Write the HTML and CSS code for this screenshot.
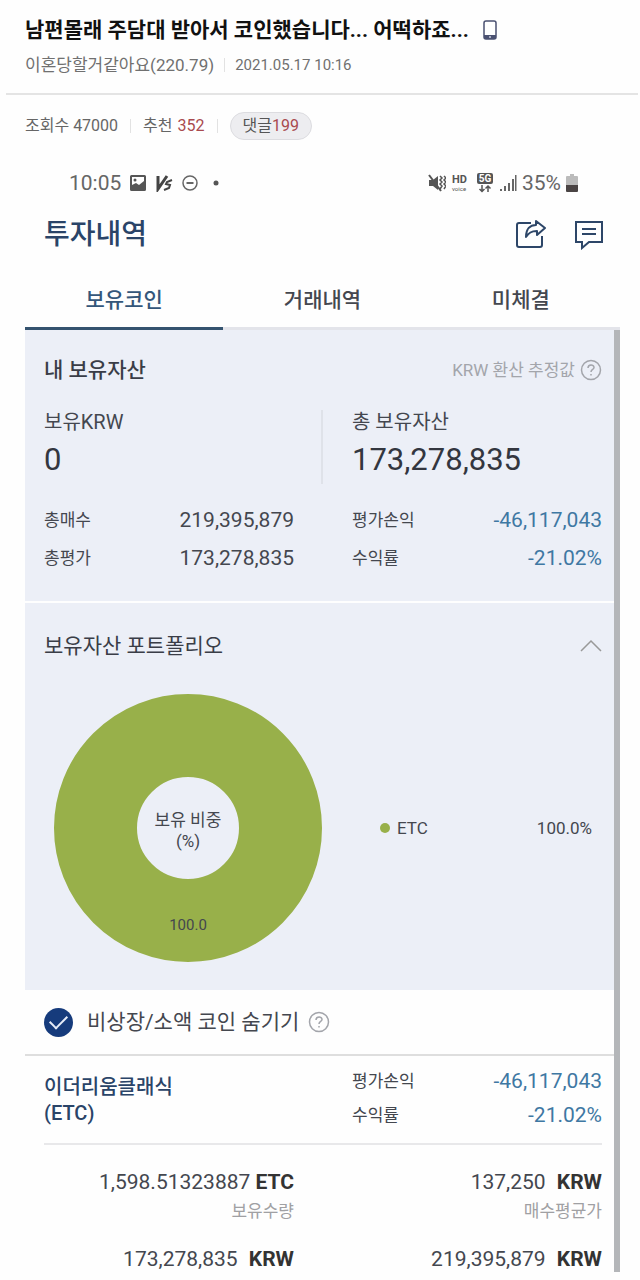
FILE: index.html
```
<!DOCTYPE html>
<html lang="ko">
<head>
    <meta charset="UTF-8">
    <meta name="viewport" content="width=device-width, initial-scale=1.0">
    <title>투자내역</title>
    <link rel="stylesheet" href="styles.css">
</head>
<body>
    <header class="post-header">
        <h1 class="post-title">
            남편몰래 주담대 받아서 코인했습니다... 어떡하죠...
            <svg class="phone-icon" viewBox="0 0 14 20" width="14" height="20">
                <rect x="1" y="1" width="12" height="18" rx="2" fill="#fff" stroke="#4b5272" stroke-width="1.5"/>
                <path d="M1 15h12v2.500a1.500 1.500 0 0 1-1.500 1.500h-9a1.500 1.500 0 0 1-1.500-1.500z" fill="#4b5272"/>
                <circle cx="7" cy="17" r="1" fill="#c9cede"/>
            </svg>
        </h1>
        <div class="post-meta">
            <span>이혼당할거같아요(220.79)</span>
            <time class="post-date">2021.05.17 10:16</time>
        </div>
    </header>

    <div class="post-stats">
        <span>조회수 47000</span>
        <span class="stat">추천 <b class="red">352</b></span>
        <span class="stat"><a class="comment-pill" href="#comments">댓글<b class="red">199</b></a></span>
    </div>

    <main class="app">
        <div class="status-bar">
            <div class="status-group">
                <span>10:05</span>
                <svg width="18" height="18" viewBox="0 0 18 18">
                    <path d="M2.500 1h13A1.500 1.500 0 0 1 17 2.500v13a1.500 1.500 0 0 1-1.500 1.500h-13A1.500 1.500 0 0 1 1 15.500v-13A1.500 1.500 0 0 1 2.500 1zM3 3v8l4-2 3 2 5-4V3z" fill="#555" fill-rule="evenodd"/>
                    <circle cx="6" cy="6" r="1.500" fill="#555"/>
                </svg>
                <svg width="18" height="18" viewBox="0 0 18 18" fill="none" stroke="#444">
                    <path d="M3 2v13L12 2" stroke-width="3"/>
                    <path d="M17 6l-5 2-1 2 4 1-1 3-5 2" stroke-width="2"/>
                </svg>
                <svg width="18" height="18" viewBox="0 0 18 18" fill="none" stroke="#666">
                    <circle cx="9" cy="9" r="7" stroke-width="1.500"/>
                    <path d="M5.500 9h7" stroke-width="2"/>
                </svg>
                <svg width="18" height="18" viewBox="0 0 18 18"><circle cx="9" cy="9" r="2.500" fill="#555"/></svg>
            </div>
            <div class="status-group tight">
                <svg width="18" height="18" viewBox="0 0 18 18">
                    <path d="M1 6h4l5-4v14l-5-4H1z" fill="#555"/>
                    <path d="M1 1l12 16" stroke="#555" stroke-width="2"/>
                    <path d="M12 2l2 2-2 2 2 2-2 2 2 2-2 3M16 2l2 2-2 2 2 2-2 2 2 2-2 3" stroke="#555" stroke-width="1.500" fill="none"/>
                </svg>
                <svg width="20" height="24" viewBox="0 0 20 24" fill="#555">
                    <text class="hd" x="1" y="12">HD</text>
                    <text class="voice" x="1" y="20">voice</text>
                </svg>
                <svg width="18" height="20" viewBox="0 0 18 20">
                    <rect x="1" y="0" width="16" height="11" rx="2" fill="#555"/>
                    <text class="five-g" x="9" y="9" text-anchor="middle" fill="#fff">5G</text>
                    <path d="M6 12v6M3.500 16L6 18.500 8.500 16M12 19v-6M9.500 15.500L12 13l2.500 2.500" stroke="#555" stroke-width="1.500" fill="none"/>
                </svg>
                <svg width="18" height="18" viewBox="0 0 18 18" fill="#666">
                    <path d="M1 15h2v2H1zM5 12h2v5H5zM9 9h2v8H9zM13 5h2v12h-2zM16 1h1.500v16H16z"/>
                </svg>
                <span>35%</span>
                <svg width="12" height="18" viewBox="0 0 12 18">
                    <path d="M4 0h4v2h3a1 1 0 0 1 1 1v9H0V3a1 1 0 0 1 1-1h3z" fill="#bbb"/>
                    <path d="M0 11h12v6a1 1 0 0 1-1 1H1a1 1 0 0 1-1-1z" fill="#4a4444"/>
                </svg>
            </div>
        </div>

        <div class="app-bar">
            <h2 class="app-title">투자내역</h2>
            <div class="app-actions">
                <button class="icon-button" aria-label="공유">
                    <svg width="30" height="30" viewBox="0 0 30 30" fill="none" stroke="#2d4668" stroke-width="2" stroke-linejoin="round">
                        <path d="M15 3H3a2 2 0 0 0-2 2v20a2 2 0 0 0 2 2h21a2 2 0 0 0 2-2v-9"/>
                        <path d="M20 1l9 7-8 7v-4c-6 0-8 2-11 6 0-8 4-12 10-12z"/>
                    </svg>
                </button>
                <button class="icon-button" aria-label="메시지">
                    <svg width="30" height="30" viewBox="0 0 30 30" fill="none" stroke="#2d4668" stroke-width="2">
                        <path d="M1 2h26v20H14l-7 6v-6H1z"/>
                        <path d="M7 9h14M7 14h14"/>
                    </svg>
                </button>
            </div>
        </div>

        <nav class="tabs">
            <button class="tab active">보유코인</button>
            <button class="tab">거래내역</button>
            <button class="tab">미체결</button>
        </nav>

        <div class="scroll-area">
            <section class="panel">
                <div class="panel-head">
                    <h3 class="bold">내 보유자산</h3>
                    <button class="help">KRW 환산 추정값
                        <svg width="22" height="22" viewBox="0 0 22 22" fill="none" stroke="currentColor">
                            <circle cx="11" cy="11" r="9.500" stroke-width="1.500"/>
                            <path d="M8 9c0-4 6-4 6-.500 0 2-3 2-3 4.500M11 15v1.500" stroke-width="1.500"/>
                        </svg>
                    </button>
                </div>
                <div class="columns totals">
                    <div>
                        <div class="total-label">보유KRW</div>
                        <div class="total-value">0</div>
                    </div>
                    <div>
                        <div class="total-label">총 보유자산</div>
                        <div class="total-value">173,278,835</div>
                    </div>
                </div>
                <dl class="columns details">
                    <div class="row"><dt>총매수</dt><dd>219,395,879</dd></div>
                    <div class="row"><dt>평가손익</dt><dd class="blue">-46,117,043</dd></div>
                    <div class="row"><dt>총평가</dt><dd>173,278,835</dd></div>
                    <div class="row"><dt>수익률</dt><dd class="blue">-21.02%</dd></div>
                </dl>
            </section>

            <section class="panel portfolio">
                <div class="panel-head">
                    <h3>보유자산 포트폴리오</h3>
                    <button class="icon-button" aria-label="접기">
                        <svg width="22" height="14" viewBox="0 0 22 14" fill="none" stroke="#999" stroke-width="1.500"><path d="M1 12L11 2l10 10"/></svg>
                    </button>
                </div>
                <div class="columns chart">
                    <svg class="donut" viewBox="0 0 270 270">
                        <circle cx="135" cy="135" r="92.500" fill="none" stroke="#98b04a" stroke-width="83"/>
                        <text class="donut-label" x="135" y="133">보유 비중</text>
                        <text class="donut-label" x="135" y="154">(%)</text>
                        <text class="donut-value" x="135" y="237">100.0</text>
                    </svg>
                    <div class="legend">
                        <span class="dot"></span>
                        <span>ETC</span>
                        <span class="legend-value">100.0%</span>
                    </div>
                </div>
            </section>

            <div class="filter">
                <input class="check" type="checkbox" id="hideSmall" checked>
                <label for="hideSmall">비상장/소액 코인 숨기기</label>
                <button class="help" aria-label="도움말">
                    <svg width="22" height="22" viewBox="0 0 22 22" fill="none" stroke="currentColor">
                        <circle cx="11" cy="11" r="9.500" stroke-width="1.500"/>
                        <path d="M8 9c0-4 6-4 6-.500 0 2-3 2-3 4.500M11 15v1.500" stroke-width="1.500"/>
                    </svg>
                </button>
            </div>

            <article class="coin">
                <div class="columns coin-head">
                    <h3 class="coin-name">이더리움클래식<br>(ETC)</h3>
                    <dl class="coin-profit">
                        <div class="row"><dt>평가손익</dt><dd class="blue">-46,117,043</dd></div>
                        <div class="row"><dt>수익률</dt><dd class="blue">-21.02%</dd></div>
                    </dl>
                </div>
                <div class="columns coin-values">
                    <div>
                        <div class="amount">1,598.51323887 <b>ETC</b></div>
                        <div class="caption">보유수량</div>
                    </div>
                    <div>
                        <div class="amount">137,250 <b class="krw">KRW</b></div>
                        <div class="caption">매수평균가</div>
                    </div>
                    <div class="amount">173,278,835 <b class="krw">KRW</b></div>
                    <div class="amount">219,395,879 <b class="krw">KRW</b></div>
                </div>
            </article>
        </div>
    </main>
</body>
</html>
```
FILE: styles.css
```
* {
    box-sizing: border-box;
}

body {
    margin: 0;
    background: #fefefe;
    color: #44474f;
    font-family: Roboto, "Noto Sans CJK KR", sans-serif;
    font-size: 17px;
    line-height: 24px;
}

h1, h2, h3, dl, dd {
    margin: 0;
    font-size: inherit;
    font-weight: 400;
}

button {
    border: none;
    background: none;
    padding: 0;
    font: inherit;
    color: inherit;
    cursor: pointer;
}

svg {
    display: block;
    flex: none;
}

/* post header */
.post-header {
    margin: 0 2px 0 6px;
    padding: 15px 19px 18px;
    border-bottom: 2px solid #e4e4e4;
}

.post-title {
    display: flex;
    align-items: center;
    gap: 14px;
    color: #111;
    font-size: 21px;
    font-weight: 700;
    line-height: 30px;
}

.post-meta {
    display: flex;
    align-items: center;
    margin-top: 10px;
    color: #707070;
    line-height: 20px;
}

.post-date {
    margin-left: 10px;
    padding-left: 10px;
    border-left: 1px solid #e2e2e2;
    font-size: 15px;
    line-height: 14px;
}

.post-stats {
    display: flex;
    align-items: center;
    padding: 17px 25px 0;
    color: #666;
    font-size: 16px;
    line-height: 28px;
}

.stat {
    display: flex;
    align-items: center;
    gap: 5px;
}

.stat::before {
    content: "";
    width: 1px;
    height: 14px;
    margin: 0 7px 0 12px;
    background: #e2e2e2;
}

.red {
    color: #a94a4e;
    font-weight: 400;
}

.comment-pill {
    padding: 0 12px;
    border: 1px solid #dcdce0;
    border-radius: 14px;
    background: #ededf0;
    color: #555;
    line-height: 26px;
    text-decoration: none;
}

/* app screen */
.app {
    margin: 31px 20px 0 25px;
}

.status-bar {
    display: flex;
    justify-content: space-between;
    padding: 0 42px 0 44px;
    color: #666;
    font-size: 21px;
}

.status-group {
    display: flex;
    align-items: center;
    gap: 8px;
}

.tight {
    gap: 5px;
}

.hd {
    font-size: 11px;
    font-weight: 700;
}

.voice {
    font-size: 6px;
}

.five-g {
    font-size: 10px;
    font-weight: 700;
}

.app-bar {
    display: flex;
    align-items: center;
    justify-content: space-between;
    margin-top: 20px;
    padding: 0 15px 0 19px;
}

.app-title {
    color: #2a4468;
    font-size: 28px;
    font-weight: 500;
    line-height: 40px;
}

.app-actions {
    display: flex;
    gap: 29px;
}

.tabs {
    display: grid;
    grid-template-columns: repeat(3, 1fr);
}

.tab {
    padding: 30px 0 12px;
    border-bottom: 3px solid #e3e4ea;
    font-size: 21px;
    font-weight: 500;
    line-height: 30px;
}

.tab.active {
    border-bottom-color: #34536f;
    color: #34567a;
}

.scroll-area {
    border-right: 6px solid #b4b6b9;
}

.panel {
    padding: 26px 12px 31px 19px;
    background: #eceff7;
}

.panel-head {
    display: flex;
    align-items: center;
    justify-content: space-between;
    color: #3a3d47;
    font-size: 21px;
    line-height: 28px;
}

.panel-head .bold {
    font-weight: 500;
}

.help {
    display: flex;
    align-items: center;
    gap: 5px;
    color: #a3a5ab;
    font-size: 17px;
}

.columns {
    display: grid;
    grid-template-columns: minmax(0, 1fr) minmax(0, 1fr);
    column-gap: 58px;
}

.totals {
    margin-top: 26px;
}

.totals > div {
    padding-bottom: 6px;
}

.totals > div:first-child {
    margin-right: -29px;
    border-right: 2px solid #dfe2e9;
}

.total-label {
    font-size: 20px;
}

.total-value {
    margin-top: 8px;
    color: #33363f;
    font-size: 31px;
    line-height: 36px;
}

.details {
    row-gap: 14px;
    margin-top: 24px;
}

.row {
    display: flex;
    align-items: center;
    justify-content: space-between;
}

.row dd {
    font-size: 21px;
}

.row .blue {
    color: #3f78a3;
}

.portfolio {
    padding-top: 29px;
    padding-bottom: 27px;
    border-top: 2px solid #fefefe;
}

.chart {
    align-items: center;
    margin-top: 33px;
}

.donut {
    width: 270px;
    margin-left: 9px;
}

.donut-label,
.donut-value {
    fill: #44474f;
    font-size: 17px;
    text-anchor: middle;
}

.donut-value {
    font-size: 15px;
}

.legend {
    display: flex;
    align-items: center;
    gap: 7px;
    padding: 0 10px 0 28px;
}

.dot {
    width: 10px;
    height: 10px;
    border-radius: 50%;
    background: #98b04a;
}

.legend-value {
    margin-left: auto;
}

.filter {
    display: flex;
    align-items: center;
    padding: 17px 12px 17px 19px;
    border-bottom: 2px solid #dedede;
    font-size: 21px;
    line-height: 30px;
}

.filter label {
    margin: 0 9px 0 14px;
}

.check {
    appearance: none;
    display: grid;
    place-items: center;
    width: 29px;
    height: 29px;
    margin: 0;
    border-radius: 50%;
    background: #163b7c;
}

.check:checked::before {
    content: "";
    width: 15px;
    height: 8px;
    border: solid #e6ecf8;
    border-width: 0 0 2px 2px;
    transform: translateY(-2px) rotate(-45deg);
}

/* coin card */
.coin {
    padding: 13px 12px 0 19px;
}

.coin-head {
    padding-bottom: 16px;
    border-bottom: 2px solid #e8e8ea;
}

.coin-name {
    padding-top: 5px;
    color: #2a4468;
    font-size: 20px;
    font-weight: 500;
    line-height: 26px;
}

.coin-profit {
    display: grid;
    row-gap: 10px;
}

.coin-values {
    row-gap: 23px;
    padding-top: 24px;
    text-align: right;
}

.amount {
    font-size: 21px;
    line-height: 26px;
}

.amount b {
    color: #333;
}

.amount .krw {
    margin-left: 6px;
}

.caption {
    margin-top: 4px;
    color: #a0a0a3;
}
```
